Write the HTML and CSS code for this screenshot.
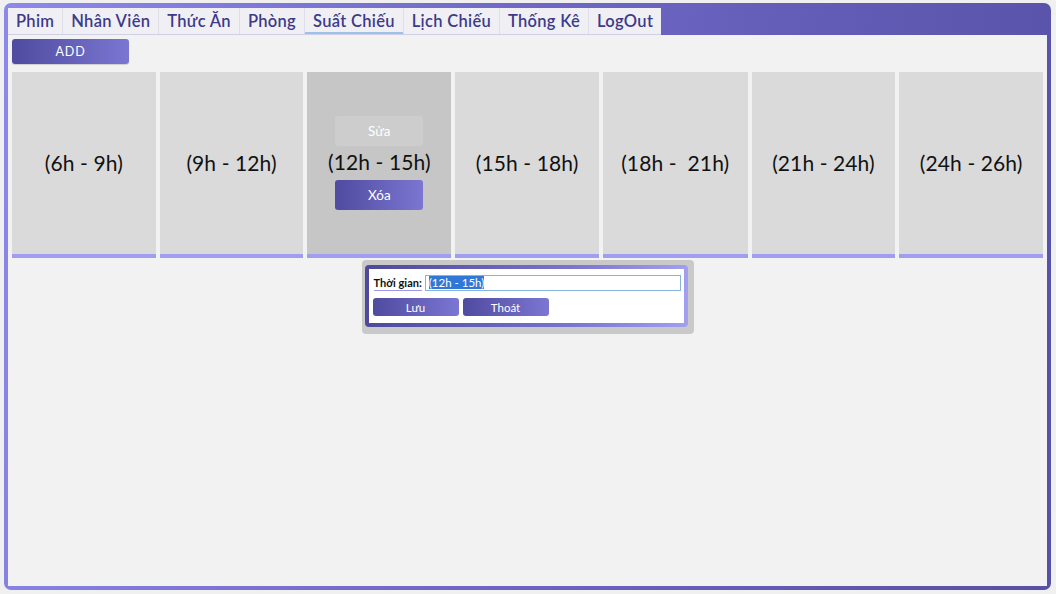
FILE: index.html
```html
<!DOCTYPE html>
<html>
<head>
<meta charset="utf-8">
<link rel="stylesheet" href="styles.css">
</head>
<body>
<div class="frame">
  <div class="header">
    <div class="tabs">
      <div class="tab">Phim</div>
      <div class="tab">Nhân Viên</div>
      <div class="tab">Thức Ăn</div>
      <div class="tab">Phòng</div>
      <div class="tab active">Suất Chiếu</div>
      <div class="tab">Lịch Chiếu</div>
      <div class="tab">Thống Kê</div>
      <div class="tab">LogOut</div>
    </div>
  </div>
  <div class="content">
    <div class="toolbar"><button class="btn add">ADD</button></div>
    <div class="cards">
      <div class="card"><span class="time">(6h - 9h)</span></div>
      <div class="card"><span class="time">(9h - 12h)</span></div>
      <div class="card selected">
        <button class="btn edit">Sửa</button>
        <span class="time">(12h - 15h)</span>
        <button class="btn del">Xóa</button>
      </div>
      <div class="card"><span class="time">(15h - 18h)</span></div>
      <div class="card"><span class="time">(18h -&nbsp; 21h)</span></div>
      <div class="card"><span class="time">(21h - 24h)</span></div>
      <div class="card"><span class="time">(24h - 26h)</span></div>
    </div>
    <div class="dialog-wrap">
      <div class="dialog">
        <div class="dialog-inner">
          <div class="row">
            <span class="label">Thời gian:</span>
            <div class="input"><span class="sel">(12h - 15h)</span></div>
          </div>
          <div class="row buttons">
            <button class="btn small">Lưu</button>
            <button class="btn small">Thoát</button>
          </div>
        </div>
      </div>
    </div>
  </div>
</div>
</body>
</html>
```

FILE: styles.css
```css
html, body {
  margin: 0;
  padding: 0;
  background: #f0f0f0;
}
body {
  width: 1056px;
  height: 594px;
  padding: 3px 5px 4px 4px;
  box-sizing: border-box;
  font-family: "Lato", "Noto Sans", sans-serif;
}
.frame {
  height: 100%;
  border-radius: 7px;
  background: linear-gradient(100deg, #8e88ea 0%, #6f68c6 45%, #5650a6 100%);
  padding: 0 4px 4px 4px;
  box-sizing: border-box;
  display: flex;
  flex-direction: column;
}
.header {
  height: 32px;
  padding-top: 5px;
  box-sizing: border-box;
  display: flex;
}
.tabs {
  display: flex;
  background: #f0f0f4;
  height: 27px;
  border-bottom: 1px solid #cfcfe6;
  box-sizing: border-box;
}
.tab {
  color: #3d3a8c;
  font-size: 16.5px;
  font-weight: 600;
  letter-spacing: 0.3px;
  padding: 0 8px;
  line-height: 26px;
  border-right: 1px solid #dedee8;
  white-space: nowrap;
}
.tab:last-child { border-right: none; }
.tab.active {
  box-shadow: inset 0 -2px 0 #9cc2ea;
}
.content {
  flex: 1;
  background: #f2f2f2;
  padding: 4px 4px 0 4px;
  display: flex;
  flex-direction: column;
}
.btn {
  border: none;
  border-radius: 3px;
  color: #fff;
  font-family: "Lato", "Noto Sans", sans-serif;
  background: linear-gradient(90deg, #4f4b9f 0%, #7b76d2 100%);
  padding: 0;
}
.add {
  width: 117px;
  height: 25px;
  font-size: 12.5px;
  letter-spacing: 0.8px;
  box-shadow: 0 1px 1px rgba(0,0,0,0.15);
}
.cards {
  display: flex;
  gap: 4px;
  margin-top: 8px;
}
.card {
  width: 144px;
  height: 186px;
  background: #dadada;
  border-bottom: 4px solid #a19ef2;
  box-sizing: border-box;
  display: flex;
  flex-direction: column;
  align-items: center;
  justify-content: center;
}
.card:nth-child(5) { width: 145px; }
.card.selected { background: #c6c6c6; }
.time {
  font-size: 21px;
  letter-spacing: 0.1px;
  color: #111;
  line-height: 24px;
}
.edit {
  width: 88px;
  height: 30px;
  background: #cdcdcd;
  font-size: 13.5px;
  margin-bottom: 4px;
}
.del {
  width: 88px;
  height: 30px;
  font-size: 13.5px;
  margin-top: 6px;
}
.dialog-wrap {
  display: flex;
  justify-content: center;
  margin-top: 2px;
}
.dialog {
  width: 332px;
  height: 74px;
  background: #c9c9c9;
  border-radius: 4px;
  padding: 5px 6px 7px 3px;
  box-sizing: border-box;
}
.dialog-inner {
  height: 100%;
  border-radius: 4px;
  border: 4px solid transparent;
  background:
    linear-gradient(#fff, #fff) padding-box,
    linear-gradient(90deg, #4d499c 0%, #7571cc 60%, #a29ef0 100%) border-box;
  box-sizing: border-box;
  padding: 5px 3px 0 4px;
}
.row {
  display: flex;
  align-items: center;
  gap: 3px;
}
.label {
  font-size: 11px;
  font-weight: 700;
  color: #111;
  border-bottom: 1px solid #9b98ee;
  padding-bottom: 1px;
  margin-top: 2px;
  margin-left: 1px;
}
.input {
  flex: 1;
  height: 16px;
  border: 1px solid #8ab2de;
  box-sizing: border-box;
  font-size: 11.5px;
  line-height: 14px;
  padding-left: 3px;
}
.sel {
  background: #3178d6;
  color: #fff;
}
.buttons {
  margin-top: 7px;
  gap: 4px;
}
.small {
  width: 86px;
  height: 18px;
  font-size: 11.5px;
}
```
